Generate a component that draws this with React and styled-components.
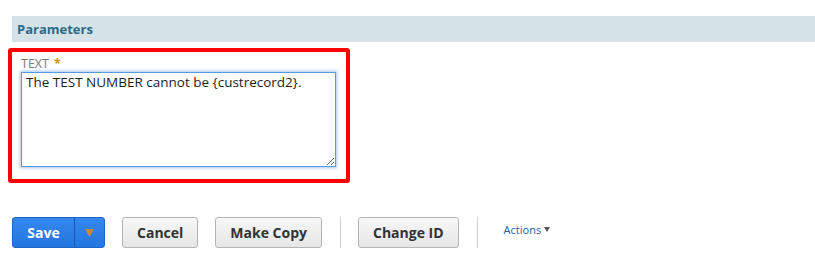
import styled, { createGlobalStyle } from 'styled-components';

const GlobalStyle = createGlobalStyle`
  body {
    margin: 0;
    background: #fff;
    font-family: "Open Sans", "Liberation Sans", sans-serif;
  }
`;

const Page = styled.div`
  width: 815px;
  height: 255px;
  padding-top: 16px;
  box-sizing: border-box;
  overflow: hidden;
`;

const SectionHeader = styled.div`
  margin-left: 12px;
  height: 26px;
  background: #d5e2e7;
  display: flex;
  align-items: center;
  padding-left: 5px;
  font-size: 13px;
  font-weight: 700;
  color: #2e6a87;
`;

const Highlight = styled.div`
  margin: 6px 0 0 8px;
  width: 342px;
  height: 135px;
  box-sizing: border-box;
  border: 4px solid #ff0000;
  border-radius: 3px;
  padding: 5px 0 0 9px;
`;

const Label = styled.div`
  font-size: 12.5px;
  color: #7a7a7a;
  line-height: 14px;
  height: 14px;
`;

const Required = styled.span`
  color: #d4900f;
  font-weight: 700;
  margin-left: 5px;
`;

const TextArea = styled.textarea`
  display: block;
  margin-top: 1px;
  width: 315px;
  height: 95px;
  box-sizing: border-box;
  border: 1px solid #5a9ae0;
  box-shadow: 0 0 3px 1px rgba(90, 150, 225, 0.55);
  padding: 1px 4px;
  font-family: "Open Sans", "Liberation Sans", sans-serif;
  font-size: 13.5px;
  line-height: 17px;
  color: #1e1e1e;
  resize: both;
  outline: none;
`;

const Toolbar = styled.div`
  display: flex;
  align-items: center;
  margin: 34px 0 0 12px;
  height: 31px;
`;

const SplitButton = styled.div`
  display: flex;
  height: 31px;
  border: 1px solid #1d62c4;
  border-radius: 3px;
  background: linear-gradient(#3488ee, #2476e0);
  box-sizing: border-box;
  overflow: hidden;
`;

const PrimaryPart = styled.button`
  width: 61px;
  border: none;
  background: transparent;
  color: #fff;
  font-family: "Open Sans", "Liberation Sans", sans-serif;
  font-size: 14px;
  font-weight: 700;
  padding: 0;
`;

const ArrowPart = styled.button`
  width: 30px;
  border: none;
  border-left: 1px solid #1a56ad;
  background: transparent;
  padding: 0;
  display: flex;
  align-items: center;
  justify-content: center;
`;

const Button = styled.button`
  height: 31px;
  margin-left: ${p => p.$gap}px;
  padding: 0 ${p => p.$pad}px;
  border: 1px solid #b5b5b5;
  border-radius: 3px;
  background: linear-gradient(#f7f7f7, #e6e6e6);
  color: #333;
  font-family: "Open Sans", "Liberation Sans", sans-serif;
  font-size: 14px;
  font-weight: 700;
  box-sizing: border-box;
`;

const Divider = styled.div`
  width: 1px;
  height: 31px;
  background: #cfcfcf;
  margin-left: ${p => p.$gap}px;
`;

const ActionsLink = styled.span`
  margin-left: 26px;
  margin-top: -6px;
  font-size: 11px;
  color: #255ea8;
  display: flex;
  align-items: center;
  gap: 3px;
`;

const Caret = () => (
  <svg width="6" height="5" viewBox="0 0 6 5">
    <path d="M0 0h6L3 5z" fill="#555" />
  </svg>
);

export default function App() {
  return (
    <>
      <GlobalStyle />
      <Page>
        <SectionHeader>Parameters</SectionHeader>
        <Highlight>
          <Label>
            TEXT<Required>*</Required>
          </Label>
          <TextArea defaultValue="The TEST NUMBER cannot be {custrecord2}." />
        </Highlight>
        <Toolbar>
          <SplitButton>
            <PrimaryPart>Save</PrimaryPart>
            <ArrowPart>
              <svg width="9" height="8" viewBox="0 0 9 8">
                <path d="M0 0h9L4.5 8z" fill="#c88a3a" />
              </svg>
            </ArrowPart>
          </SplitButton>
          <Button $gap={17} $pad={14}>Cancel</Button>
          <Button $gap={17} $pad={14}>Make Copy</Button>
          <Divider $gap={18} />
          <Button $gap={17} $pad={14}>Change ID</Button>
          <Divider $gap={18} />
          <ActionsLink>
            Actions <Caret />
          </ActionsLink>
        </Toolbar>
      </Page>
    </>
  );
}
